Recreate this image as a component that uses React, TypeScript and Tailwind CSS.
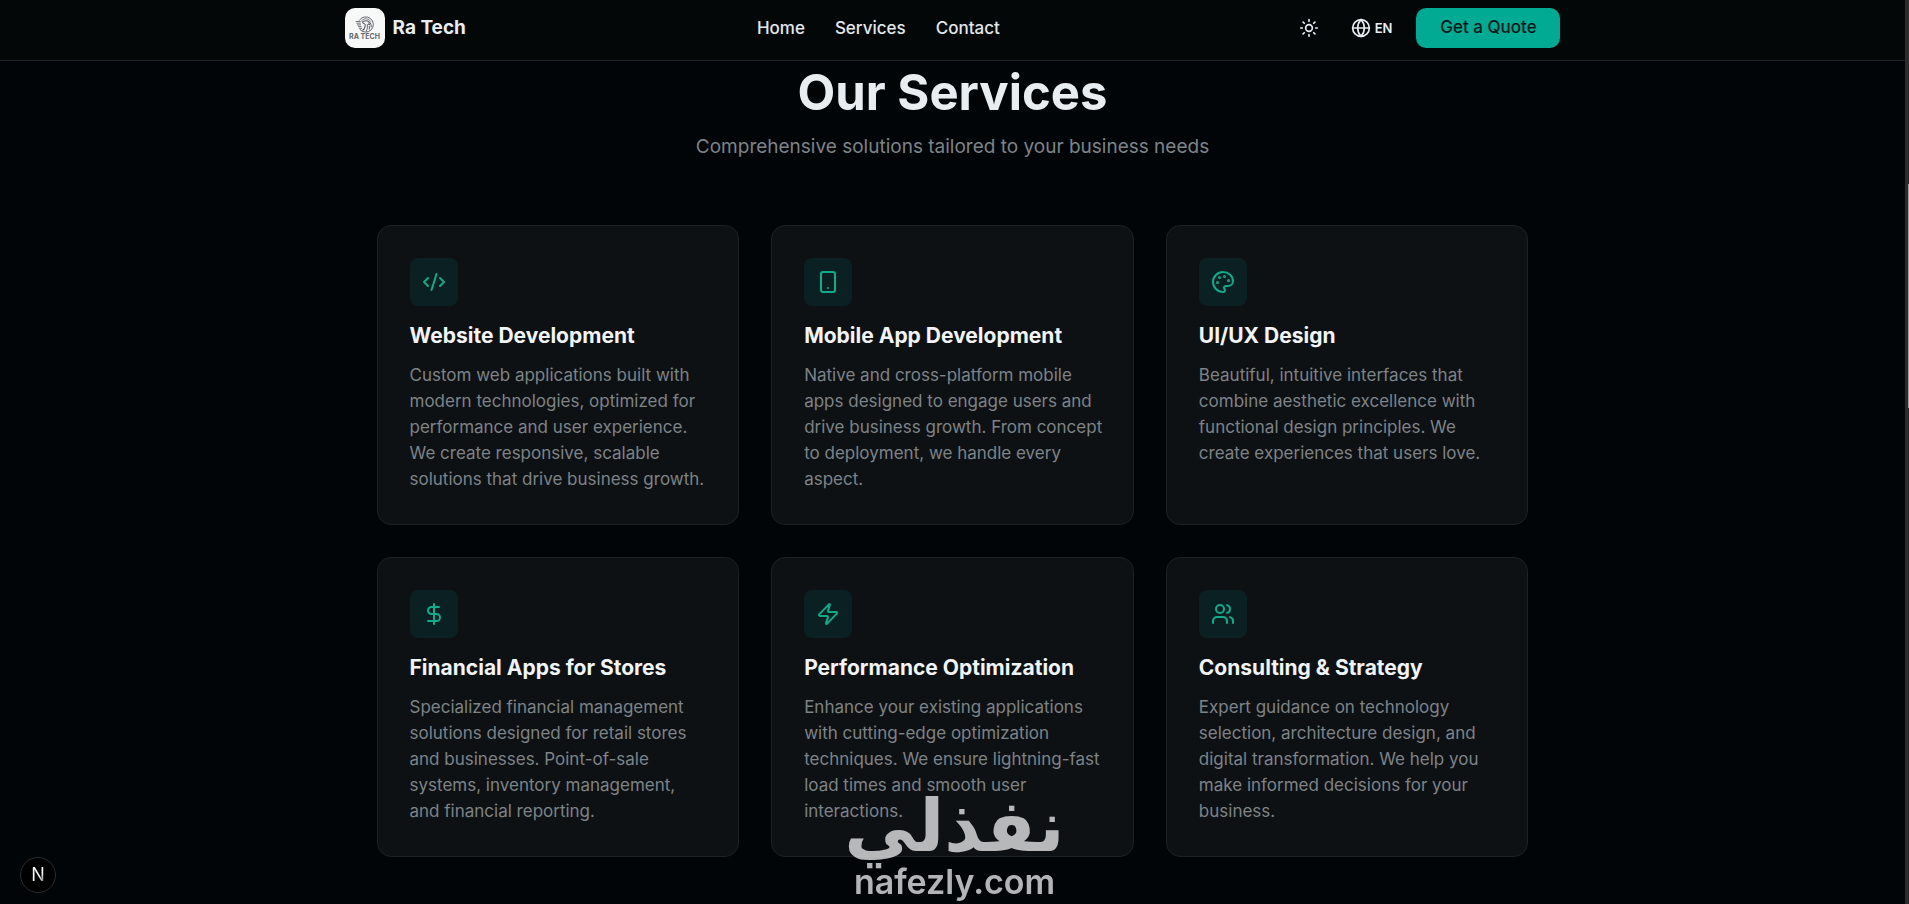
import {
    CodeXml,
    DollarSign,
    Globe,
    Palette,
    Smartphone,
    Sun,
    Users,
    Zap,
} from "lucide-react";

const navLinks = [
    { label: "Home", href: "#home" },
    { label: "Services", href: "#services" },
    { label: "Contact", href: "#contact" },
];

const services = [
    {
        icon: CodeXml,
        title: "Website Development",
        description:
            "Custom web applications built with modern technologies, optimized for performance and user experience. We create responsive, scalable solutions that drive business growth.",
    },
    {
        icon: Smartphone,
        title: "Mobile App Development",
        description:
            "Native and cross-platform mobile apps designed to engage users and drive business growth. From concept to deployment, we handle every aspect.",
    },
    {
        icon: Palette,
        title: "UI/UX Design",
        description:
            "Beautiful, intuitive interfaces that combine aesthetic excellence with functional design principles. We create experiences that users love.",
    },
    {
        icon: DollarSign,
        title: "Financial Apps for Stores",
        description:
            "Specialized financial management solutions designed for retail stores and businesses. Point-of-sale systems, inventory management, and\u00a0financial reporting.",
    },
    {
        icon: Zap,
        title: "Performance Optimization",
        description:
            "Enhance your existing applications with cutting-edge optimization techniques. We ensure lightning-fast load times and smooth user interactions.",
    },
    {
        icon: Users,
        title: "Consulting & Strategy",
        description:
            "Expert guidance on technology selection, architecture design, and digital transformation. We help you make informed decisions for your business.",
    },
];

function LogoMark() {
    return (
        <span className="flex size-10 flex-col items-center justify-center rounded-[10px] bg-[#f7f8f8] text-[#62666a]">
            <svg
                viewBox="0 0 20 17"
                className="h-[17px] w-5"
                fill="none"
                stroke="currentColor"
                aria-hidden="true"
            >
                <path d="M4.2 4.6A7.6 7.6 0 1 1 4.6 13" strokeWidth="1" />
                <path d="M6 5.6a5.6 5.6 0 0 1 9.8 0" strokeWidth=".8" />
                <path d="M.6 5.5h5M1.4 7.2h4.4M2 8.9h4M3 10.6h3.5M4 12.3h3" strokeWidth=".9" />
                <path d="M7.5 14.5c2-1.5 3-3.5 2.6-6.5M10.1 8c-1.5-.2-2.4-.8-2.6-2 2-1.5 5-1.7 6.5 0l1.5 1.5-1 1.2-1.6-1" strokeWidth="1.2" />
                <path d="M12.2 8.3c.5 2.5.2 4.5-.9 6.9M14.3 10v3.6M16.2 8.5v3" strokeWidth="1" />
            </svg>
            <span className="whitespace-nowrap text-[7px] leading-[8px] font-bold">
                RA TECH
            </span>
        </span>
    );
}

function Header() {
    return (
        <header className="sticky top-0 z-10 border-b border-[#1f2325] bg-[#030708]">
            <div className="mx-auto flex h-[60px] max-w-7xl items-center justify-between px-8 pb-1">
                <a href="#home" className="flex items-center gap-2">
                    <LogoMark />
                    <span className="text-[19px] font-bold text-[#e8edf2]">Ra Tech</span>
                </a>

                <nav className="flex gap-[30px]">
                    {navLinks.map((link) => (
                        <a
                            key={link.label}
                            href={link.href}
                            className="text-[17px] leading-6 font-medium text-[#e3e7ea] hover:text-[#00aa93]"
                        >
                            {link.label}
                        </a>
                    ))}
                </nav>

                <div className="flex items-center gap-4 text-[#e8edf2]">
                    <button type="button" aria-label="Toggle theme" className="p-2">
                        <Sun size={20} />
                    </button>
                    <button
                        type="button"
                        className="flex items-center gap-1 p-2 text-[13px] leading-5 font-semibold"
                    >
                        <Globe size={20} />
                        EN
                    </button>
                    <button
                        type="button"
                        className="h-10 w-36 rounded-[10px] bg-[#00aa93] text-[17px] font-medium text-[#03181a] hover:bg-[#00bfa5]"
                    >
                        Get a Quote
                    </button>
                </div>
            </div>
        </header>
    );
}

function Services() {
    return (
        <section id="services" className="mx-auto max-w-6xl pt-2 pb-11">
            {/* Heading */}
            <div className="mb-16 text-center">
                <h2 className="mb-4 text-[49px] leading-[48px] font-bold text-[#e8edf2]">
                    Our Services
                </h2>
                <p className="text-[19px] leading-7 text-[#7d8387]">
                    Comprehensive solutions tailored to your business needs
                </p>
            </div>

            {/* Cards */}
            <div className="grid gap-8 md:grid-cols-2 lg:grid-cols-3">
                {services.map(({ icon: Icon, title, description }) => (
                    <article
                        key={title}
                        className="rounded-[14px] border border-[#1d2123] bg-[#0e1114] py-8 pr-6 pl-8"
                    >
                        <div className="mb-4 flex size-12 items-center justify-center rounded-lg bg-[#0b2022] text-[#10ab8b]">
                            <Icon size={24} />
                        </div>
                        <h3 className="mb-3 text-[21px] leading-7 font-bold text-[#f1f4f6]">
                            {title}
                        </h3>
                        <p className="text-[17px] leading-[26px] text-[#7d8387]">
                            {description}
                        </p>
                    </article>
                ))}
            </div>
        </section>
    );
}

function App() {
    return (
        <div className="flex min-h-screen bg-[#010508] font-['Inter','Noto_Sans',sans-serif]">
            <div className="min-w-0 flex-1">
                <Header />
                <main>
                    <Services />
                </main>
            </div>

            {/* Scroll track */}
            <div className="flex w-1 justify-end bg-[#2c2c2c] pt-[184px]">
                <div className="h-56 w-px bg-[#9a9a9a]" />
            </div>

            <button
                type="button"
                aria-label="Open dev tools"
                className="fixed bottom-[11px] left-5 z-20 flex size-9 items-center justify-center rounded-full border border-[#2a2c2d] bg-black"
            >
                <span className="bg-linear-to-br from-white from-60% to-[#444] bg-clip-text text-lg leading-none text-transparent">
                    N
                </span>
            </button>

            {/* Watermark */}
            <div className="pointer-events-none fixed inset-x-0 bottom-0 z-20 flex flex-col items-center pb-1 text-white opacity-70">
                <span
                    lang="ar"
                    dir="rtl"
                    className="font-['DejaVu_Sans',sans-serif] text-[72px] leading-[76px] font-bold"
                >
                    نفذلي
                </span>
                <span className="text-[34px] leading-9 font-semibold">nafezly.com</span>
            </div>
        </div>
    );
}

export default App;
